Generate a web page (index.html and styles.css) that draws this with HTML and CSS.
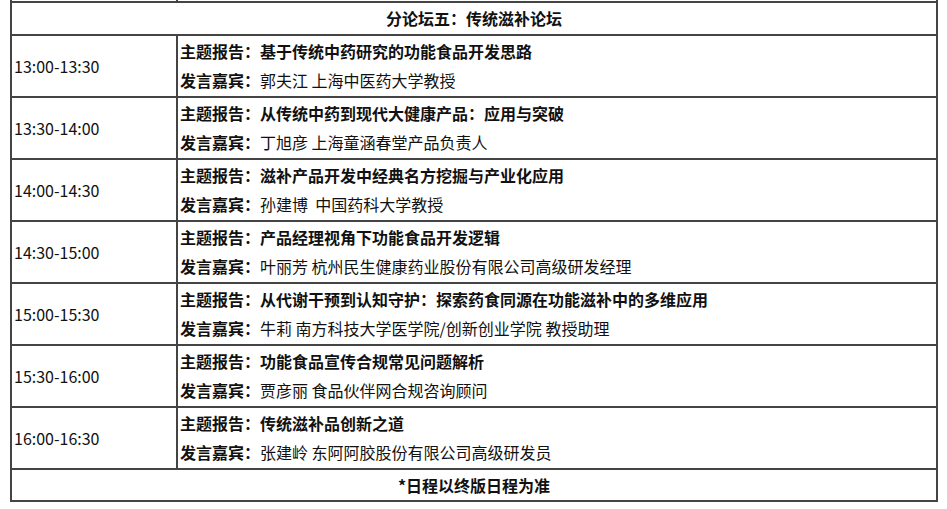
FILE: index.html
```html
<!DOCTYPE html>
<html lang="zh-CN">
<head>
<meta charset="utf-8">
<title>分论坛五：传统滋补论坛</title>
<link rel="stylesheet" href="styles.css">
</head>
<body>
<table class="agenda">
  <colgroup><col class="col-time"><col class="col-talk"></colgroup>
  <tr class="prev-row"><td></td><td></td></tr>
  <tr class="head-row"><td colspan="2" class="center"><b>分论坛五：传统滋补论坛</b></td></tr>
  <tr class="talk-row">
    <td class="time">13:00-13:30</td>
    <td class="talk"><div class="line"><b>主题报告：基于传统中药研究的功能食品开发思路</b></div><div class="line"><b>发言嘉宾：</b>郭夫江 上海中医药大学教授</div></td>
  </tr>
  <tr class="talk-row">
    <td class="time">13:30-14:00</td>
    <td class="talk"><div class="line"><b>主题报告：从传统中药到现代大健康产品：应用与突破</b></div><div class="line"><b>发言嘉宾：</b>丁旭彦 上海童涵春堂产品负责人</div></td>
  </tr>
  <tr class="talk-row">
    <td class="time">14:00-14:30</td>
    <td class="talk"><div class="line"><b>主题报告：滋补产品开发中经典名方挖掘与产业化应用</b></div><div class="line"><b>发言嘉宾：</b>孙建博&nbsp; 中国药科大学教授</div></td>
  </tr>
  <tr class="talk-row">
    <td class="time">14:30-15:00</td>
    <td class="talk"><div class="line"><b>主题报告：产品经理视角下功能食品开发逻辑</b></div><div class="line"><b>发言嘉宾：</b>叶丽芳 杭州民生健康药业股份有限公司高级研发经理</div></td>
  </tr>
  <tr class="talk-row">
    <td class="time">15:00-15:30</td>
    <td class="talk"><div class="line"><b>主题报告：从代谢干预到认知守护：探索药食同源在功能滋补中的多维应用</b></div><div class="line"><b>发言嘉宾：</b>牛莉 南方科技大学医学院/创新创业学院 教授助理</div></td>
  </tr>
  <tr class="talk-row">
    <td class="time">15:30-16:00</td>
    <td class="talk"><div class="line"><b>主题报告：功能食品宣传合规常见问题解析</b></div><div class="line"><b>发言嘉宾：</b>贾彦丽 食品伙伴网合规咨询顾问</div></td>
  </tr>
  <tr class="talk-row">
    <td class="time">16:00-16:30</td>
    <td class="talk"><div class="line"><b>主题报告：传统滋补品创新之道</b></div><div class="line"><b>发言嘉宾：</b>张建岭 东阿阿胶股份有限公司高级研发员</div></td>
  </tr>
  <tr class="foot-row"><td colspan="2" class="center"><b>*日程以终版日程为准</b></td></tr>
</table>
</body>
</html>
```
FILE: styles.css
```css
html, body {
  margin: 0;
  padding: 0;
  background: #ffffff;
}
body {
  font-family: "Noto Sans CJK SC", "Noto Sans", sans-serif;
  font-size: 16px;
  color: #111111;
}
.agenda {
  border-collapse: collapse;
  width: 928px;
  margin: -30px 0 0 10px;
  table-layout: fixed;
}
.agenda td {
  border: 2px solid #444444;
  padding: 0 2px;
  vertical-align: middle;
}
.col-time { width: 166px; }
.prev-row td { height: 29px; }
.head-row td { height: 31px; line-height: 31px; }
.foot-row td { height: 30px; line-height: 30px; }
.talk-row td { height: 60px; }
.center { text-align: center; }
.time { padding-left: 1px; }
.line {
  line-height: 29px;
  white-space: nowrap;
}
b { font-weight: 700; }
```
